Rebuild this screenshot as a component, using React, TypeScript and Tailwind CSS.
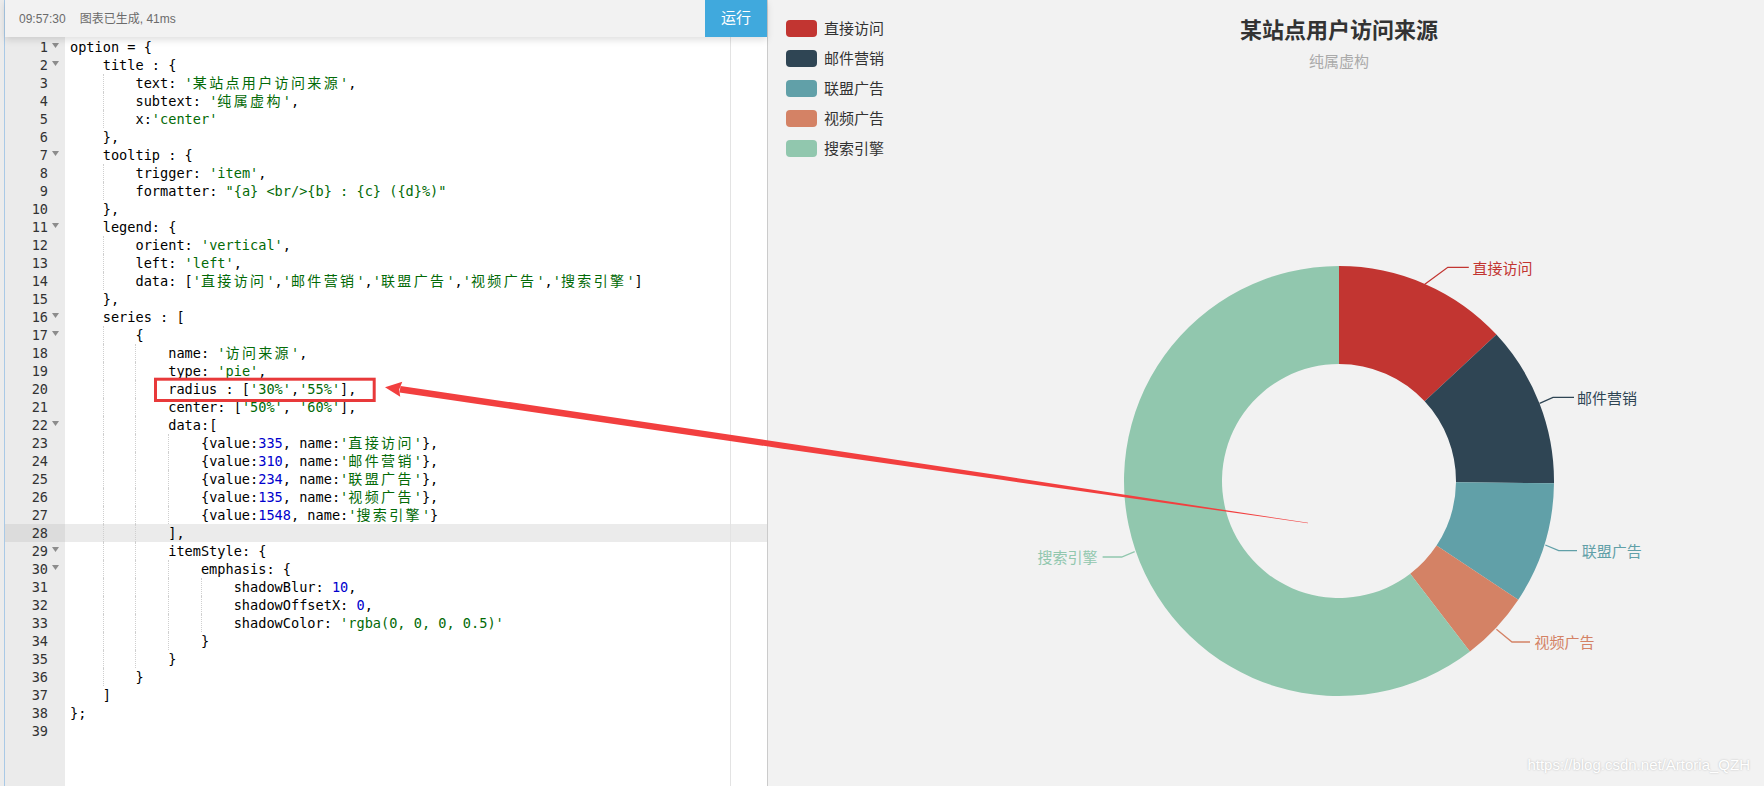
import React from "react";

const CODE: string[] = [
  "option = {",
  "    title : {",
  "        text: '某站点用户访问来源',",
  "        subtext: '纯属虚构',",
  "        x:'center'",
  "    },",
  "    tooltip : {",
  "        trigger: 'item',",
  '        formatter: "{a} <br/>{b} : {c} ({d}%)"',
  "    },",
  "    legend: {",
  "        orient: 'vertical',",
  "        left: 'left',",
  "        data: ['直接访问','邮件营销','联盟广告','视频广告','搜索引擎']",
  "    },",
  "    series : [",
  "        {",
  "            name: '访问来源',",
  "            type: 'pie',",
  "            radius : ['30%','55%'],",
  "            center: ['50%', '60%'],",
  "            data:[",
  "                {value:335, name:'直接访问'},",
  "                {value:310, name:'邮件营销'},",
  "                {value:234, name:'联盟广告'},",
  "                {value:135, name:'视频广告'},",
  "                {value:1548, name:'搜索引擎'}",
  "            ],",
  "            itemStyle: {",
  "                emphasis: {",
  "                    shadowBlur: 10,",
  "                    shadowOffsetX: 0,",
  "                    shadowColor: 'rgba(0, 0, 0, 0.5)'",
  "                }",
  "            }",
  "        }",
  "    ]",
  "};",
  "",
];

const FOLD = new Set([1, 2, 7, 11, 16, 17, 22, 29, 30]);
const ACTIVE = 28;

const isCJK = (ch: string) => /[\u3000-\u9fff\uff00-\uffef]/.test(ch);

function renderChars(text: string, keyBase: string) {
  const out: React.ReactNode[] = [];
  let buf = "";
  let i = 0;
  for (const ch of text) {
    if (isCJK(ch)) {
      if (buf) {
        out.push(<React.Fragment key={keyBase + "b" + i}>{buf}</React.Fragment>);
        buf = "";
      }
      out.push(
        <span
          key={keyBase + "c" + i}
          className="inline-block w-[16.36px] align-top text-[14px] leading-[18px]"
        >
          {ch}
        </span>
      );
    } else {
      buf += ch;
    }
    i++;
  }
  if (buf) out.push(<React.Fragment key={keyBase + "e"}>{buf}</React.Fragment>);
  return out;
}

function tokenize(line: string, lineKey: string) {
  const re = /('[^']*'|"[^"]*")|([A-Za-z_$][\w$]*)|(\d+(?:\.\d+)?)|([^'"A-Za-z_$\d]+)/g;
  const nodes: React.ReactNode[] = [];
  let m: RegExpExecArray | null;
  let k = 0;
  while ((m = re.exec(line)) !== null) {
    const key = lineKey + "-" + k++;
    if (m[1]) {
      nodes.push(
        <span key={key} className="text-[#036a07]">
          {renderChars(m[1], key)}
        </span>
      );
    } else if (m[3]) {
      nodes.push(
        <span key={key} className="text-[#0000cd]">
          {m[3]}
        </span>
      );
    } else {
      nodes.push(<React.Fragment key={key}>{m[0]}</React.Fragment>);
    }
  }
  return nodes;
}

function CodeLine({ text, n }: { text: string; n: number }) {
  const lead = text.length - text.trimStart().length;
  const levels = Math.floor(lead / 4);
  const rest = text.slice(levels * 4);
  const chunks: React.ReactNode[] = [];
  for (let k = 0; k < levels; k++) {
    chunks.push(
      k === 0 ? (
        <span key={"i" + k} className="inline-block h-[18px] w-[4ch] align-top" />
      ) : (
        <span
          key={"i" + k}
          className="inline-block h-[18px] w-[4ch] border-l border-dotted border-[#cfcfcf] align-top"
        />
      )
    );
  }
  return (
    <div
      className={
        "h-[18px] whitespace-pre pl-[5px] leading-[18px] text-black " +
        (n === ACTIVE ? "bg-[#ebebeb]" : "")
      }
    >
      {chunks}
      {tokenize(rest, "l" + n)}
    </div>
  );
}

function GutterRow({ n }: { n: number }) {
  return (
    <div
      className={
        "flex h-[18px] items-center justify-end pr-[3px] leading-[18px] text-[#333] " +
        (n === ACTIVE ? "bg-[#dcdcdc]" : "")
      }
    >
      <span>{n}</span>
      <span className="flex w-[14px] justify-center pb-[3px]">
        {FOLD.has(n) ? (
          <svg width="7" height="5" viewBox="0 0 7 5">
            <path d="M0 0 L7 0 L3.5 5 Z" fill="#8c8c8c" />
          </svg>
        ) : null}
      </span>
    </div>
  );
}

const CX = 1339;
const CY = 481;
const R = 215;
const RI = 117;

const DATA = [
  { name: "直接访问", value: 335, color: "#c23531" },
  { name: "邮件营销", value: 310, color: "#2f4554" },
  { name: "联盟广告", value: 234, color: "#61a0a8" },
  { name: "视频广告", value: 135, color: "#d48265" },
  { name: "搜索引擎", value: 1548, color: "#91c7ae" },
];

function pt(r: number, deg: number): [number, number] {
  const a = (deg * Math.PI) / 180;
  return [CX + r * Math.sin(a), CY - r * Math.cos(a)];
}

function arcPath(a0: number, a1: number) {
  const [x0, y0] = pt(R, a0);
  const [x1, y1] = pt(R, a1);
  const [x2, y2] = pt(RI, a1);
  const [x3, y3] = pt(RI, a0);
  const large = a1 - a0 > 180 ? 1 : 0;
  return `M${x0} ${y0} A${R} ${R} 0 ${large} 1 ${x1} ${y1} L${x2} ${y2} A${RI} ${RI} 0 ${large} 0 ${x3} ${y3} Z`;
}

const LABELS = [
  { text: "直接访问", color: "#c23531", pts: "1424.8,284.3 1447.8,267.3 1468.8,267.3", x: 1472.6, y: 267, anchor: "start" },
  { text: "邮件营销", color: "#2f4554", pts: "1539.6,403.3 1553,397.3 1574,397.3", x: 1577, y: 397, anchor: "start" },
  { text: "联盟广告", color: "#61a0a8", pts: "1545.3,545 1558.7,550.7 1577,550.7", x: 1581.7, y: 550.5, anchor: "start" },
  { text: "视频广告", color: "#d48265", pts: "1496.4,629.3 1512,642 1530,642", x: 1534.6, y: 641, anchor: "start" },
  { text: "搜索引擎", color: "#91c7ae", pts: "1134.7,551.7 1121.7,557 1102.6,557", x: 1097.6, y: 556.5, anchor: "end" },
];

function PieChart() {
  const total = DATA.reduce((s, d) => s + d.value, 0);
  let acc = 0;
  const slices = DATA.map((d) => {
    const a0 = (acc / total) * 360;
    acc += d.value;
    const a1 = (acc / total) * 360;
    return { ...d, a0, a1 };
  });
  return (
    <svg
      className="absolute inset-0"
      width="1142"
      height="786"
      viewBox="768 0 1142 786"
    >
      {slices.map((s) => (
        <path key={s.name} d={arcPath(s.a0, s.a1)} fill={s.color} />
      ))}
      {LABELS.map((l) => (
        <g key={l.text}>
          <polyline points={l.pts} fill="none" stroke={l.color} strokeWidth="1.3" />
          <text
            x={l.x}
            y={l.y}
            fill={l.color}
            fontSize="15"
            textAnchor={l.anchor as "start" | "end"}
            dominantBaseline="central"
            fontFamily="'Noto Sans CJK SC', sans-serif"
          >
            {l.text}
          </text>
        </g>
      ))}
    </svg>
  );
}

function Overlay() {
  return (
    <svg
      className="pointer-events-none absolute inset-0 z-20"
      width="1764"
      height="786"
      viewBox="0 0 1764 786"
    >
      <rect x="155.5" y="379.2" width="218.7" height="21.3" fill="none" stroke="#e8393a" strokeWidth="3" />
      <polygon
        points="400.5,385.9 780.4,442.2 1000.3,475.6 1308,522.8 1308,523.2 999.7,479.6 779.6,448.2 399.5,392.5"
        fill="#f23f3f"
      />
      <polygon points="385,387.3 402.3,381.8 399.2,389.6 400.2,396.8" fill="#f23f3f" />
    </svg>
  );
}

export default function App() {
  return (
    <div className="relative flex h-[786px] w-[1764px] overflow-hidden bg-[#f2f2f2] font-['Liberation_Sans','Noto_Sans_CJK_SC',sans-serif]">
      {/* Editor panel */}
      <div className="flex h-full w-[768px] shrink-0 bg-[#ececec] pl-[4px]">
        <div className="flex min-w-0 flex-1 flex-col border-l border-r border-l-[#a9c9e6] border-r-[#cbcbcb]">
          <div className="relative z-10 flex h-[37px] shrink-0 shadow-[0_3px_7px_rgba(0,0,0,0.13)]">
            <div className="flex flex-1 items-center bg-[#f2f2f2] pl-[14px] text-[12px] text-[#6b6b6b]">
              <span>09:57:30</span>
              <span className="ml-[14px]">图表已生成, 41ms</span>
            </div>
            <div className="flex w-[62px] items-center justify-center bg-[#40a9dd] text-[15px] text-white">
              运行
            </div>
          </div>
          <div className="relative flex min-h-0 flex-1 font-['DejaVu_Sans_Mono','Noto_Sans_CJK_SC',monospace] text-[13.6px]">
            <div className="w-[60px] shrink-0 bg-[#ebebeb] pt-[1px]">
              {CODE.map((_, i) => (
                <GutterRow key={i} n={i + 1} />
              ))}
            </div>
            <div className="relative min-w-0 flex-1 bg-white pt-[1px]">
              {CODE.map((t, i) => (
                <CodeLine key={i} text={t} n={i + 1} />
              ))}
              <div className="absolute bottom-0 left-[665px] top-0 w-px bg-[#e3e3e3]" />
            </div>
          </div>
        </div>
      </div>

      {/* Chart panel */}
      <div className="relative min-w-0 flex-1 overflow-hidden bg-[#f2f2f2] font-['Noto_Sans_CJK_SC',sans-serif]">
        <div className="relative h-full w-[1142px]">
          <PieChart />
          <div className="relative grid grid-cols-1">
            <div className="col-start-1 row-start-1 flex flex-col gap-[12px] justify-self-start pl-[18px] pt-[19px]">
              {DATA.map((d) => (
                <div key={d.name} className="flex h-[18px] items-center gap-[7px]">
                  <span
                    className={
                      "h-[17px] w-[31px] rounded-[4px] " +
                      (d.name === "直接访问"
                        ? "bg-[#c23531]"
                        : d.name === "邮件营销"
                        ? "bg-[#2f4554]"
                        : d.name === "联盟广告"
                        ? "bg-[#61a0a8]"
                        : d.name === "视频广告"
                        ? "bg-[#d48265]"
                        : "bg-[#91c7ae]")
                    }
                  />
                  <span className="text-[15px] leading-[18px] text-[#333]">{d.name}</span>
                </div>
              ))}
            </div>
            <div className="col-start-1 row-start-1 flex flex-col items-center justify-self-center pt-[13px]">
              <div className="text-[22px] font-bold leading-[30px] text-[#333]">某站点用户访问来源</div>
              <div className="mt-[8px] text-[15px] leading-[20px] text-[#aaa]">纯属虚构</div>
            </div>
          </div>
        </div>
      </div>

      <div className="absolute bottom-[11px] right-[14px] z-10 font-['Liberation_Sans',sans-serif] text-[15px] leading-[20px] text-white [text-shadow:0_0_2px_rgba(0,0,0,0.25)]">
        https://blog.csdn.net/Artoria_QZH
      </div>

      <Overlay />
    </div>
  );
}
